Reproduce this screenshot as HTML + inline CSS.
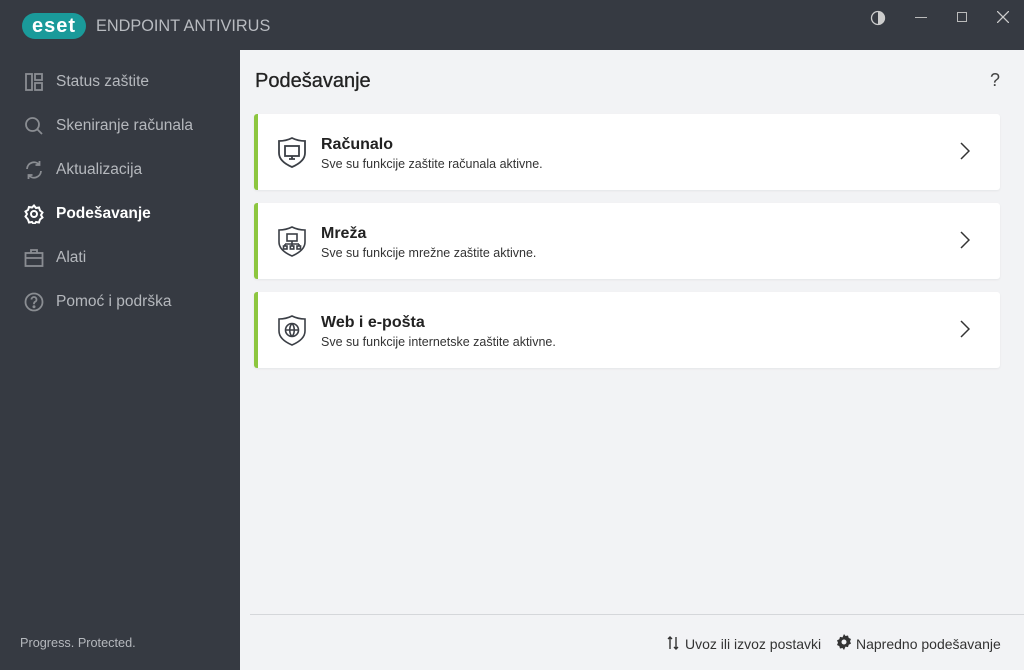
<!DOCTYPE html>
<html><head><meta charset="utf-8"><style>
*{margin:0;padding:0;box-sizing:border-box}
body{width:1024px;height:670px;background:#363a42;font-family:"Liberation Sans",sans-serif;position:relative;overflow:hidden}
.logo{position:absolute;left:22px;top:13px;width:64px;height:26px;background:#1a9a9a;border-radius:13px;color:#fff;font-weight:bold;font-size:20px;line-height:26px;text-align:center;letter-spacing:1px}
.title{position:absolute;left:96px;top:17px;color:#b8bbc0;font-size:16.3px}
.nav{position:absolute;left:24px;color:#b5b8bd;font-size:15.5px}
.nav svg{position:absolute;left:0;top:-1px}
.nav span{position:absolute;left:32px;top:0;white-space:nowrap}
.main{position:absolute;left:240px;top:50px;width:784px;height:620px;background:#f2f3f5}
h1{position:absolute;left:15px;top:20px;font-size:20px;font-weight:normal;color:#222;-webkit-text-stroke:.3px #222}
.card{position:absolute;left:14px;width:746px;height:76px;background:#fff;border-left:4px solid #8dc63f;border-radius:3px;box-shadow:0 1px 2px rgba(0,0,0,.06)}
.card b{position:absolute;left:63px;top:22px;font-size:16px;color:#222}
.card p{position:absolute;left:63px;top:43px;font-size:12.5px;color:#333}
.card svg.ic{position:absolute;left:19px;top:22px}
.chev{position:absolute;right:30px;top:28px}
.foot{position:absolute;left:10px;top:564px;width:774px;border-top:1px solid #d5d7da}
.fl{position:absolute;top:586px;font-size:14px;color:#333}
</style></head><body>
<div class="logo">eset</div>
<div class="title">ENDPOINT ANTIVIRUS</div>
<svg style="position:absolute;left:870px;top:10px" width="16" height="16"><circle cx="8" cy="8" r="6.5" fill="none" stroke="#ccc" stroke-width="1.3"/><path d="M8 1.5a6.5 6.5 0 0 1 0 13z" fill="#ccc"/></svg>
<div style="position:absolute;left:915px;top:17px;width:12px;height:1px;background:#bbb"></div>
<div style="position:absolute;left:957px;top:12px;width:10px;height:10px;border:1px solid #bbb"></div>
<svg style="position:absolute;left:997px;top:11px" width="12" height="12"><path d="M0 0L12 12M12 0L0 12" stroke="#ccc" stroke-width="1.3"/></svg>

<div class="nav" style="top:73px"><svg width="20" height="20" fill="none" stroke="#8a8d92" stroke-width="1.8"><rect x="2" y="2" width="6" height="16"/><rect x="11" y="2" width="7" height="6"/><rect x="11" y="11" width="7" height="7"/></svg><span>Status zaštite</span></div>
<div class="nav" style="top:117px"><svg width="20" height="20" fill="none" stroke="#8a8d92" stroke-width="1.8"><circle cx="8.5" cy="8.5" r="6.5"/><path d="M13 13l5 5"/></svg><span>Skeniranje računala</span></div>
<div class="nav" style="top:161px"><svg width="20" height="20" fill="none" stroke="#8a8d92" stroke-width="1.8"><path d="M3 9a7 7 0 0 1 12.5-4M17 11a7 7 0 0 1-12.5 4M15.5 1v4h-4M4.5 19v-4h4"/></svg><span>Aktualizacija</span></div>
<div class="nav" style="top:205px;color:#fff;font-weight:bold"><svg width="20" height="20" fill="none" stroke="#fff" stroke-width="2"><circle cx="10" cy="10" r="3"/><path d="M10 1.5l2 2.5 3-.5 1 3 2.5 2-1.5 2.5 1.5 2.5-2.5 2-1 3-3-.5-2 2.5-2-2.5-3 .5-1-3L1.5 12.5 3 10 1.5 7.5 4 6l1-3 3 .5z"/></svg><span>Podešavanje</span></div>
<div class="nav" style="top:249px"><svg width="20" height="20" fill="none" stroke="#8a8d92" stroke-width="1.8"><rect x="1.5" y="5" width="17" height="13"/><path d="M7 5V2h6v3M1.5 10h17"/></svg><span>Alati</span></div>
<div class="nav" style="top:293px"><svg width="20" height="20" fill="none" stroke="#8a8d92" stroke-width="1.8"><circle cx="10" cy="10" r="8.5"/><path d="M7.5 7.5a2.5 2.5 0 1 1 3.5 2.3c-.7.4-1 .9-1 1.7v.8"/><circle cx="10" cy="14.8" r=".6" fill="#8a8d92"/></svg><span>Pomoć i podrška</span></div>
<div style="position:absolute;left:20px;top:636px;color:#b5b8bd;font-size:12.7px">Progress. Protected.</div>

<div class="main">
<h1>Podešavanje</h1>
<div style="position:absolute;left:750px;top:20px;font-size:18px;color:#444">?</div>
<div class="card" style="top:64px"><svg class="ic" width="30" height="34" fill="none" stroke="#3b3f46" stroke-width="1.8"><path d="M15 2C11 4 7 5 2 5v12c0 7 6 11 13 14 7-3 13-7 13-14V5c-5 0-9-1-13-3z"/><rect x="8" y="10" width="14" height="10"/><path d="M12 23h6M15 20v3"/></svg><b>Računalo</b><p>Sve su funkcije zaštite računala aktivne.</p><svg class="chev" width="10" height="18" fill="none" stroke="#333" stroke-width="1.5"><path d="M1 1l8 8-8 8"/></svg></div>
<div class="card" style="top:153px"><svg class="ic" width="30" height="34" fill="none" stroke="#3b3f46" stroke-width="1.6"><path d="M15 2C11 4 7 5 2 5v12c0 7 6 11 13 14 7-3 13-7 13-14V5c-5 0-9-1-13-3z"/><rect x="10" y="9" width="10" height="7"/><path d="M15 16v3M8 19h14M8 19v2M15 19v2M22 19v2"/><rect x="6.5" y="21" width="3.5" height="3"/><rect x="13.3" y="21" width="3.5" height="3"/><rect x="20" y="21" width="3.5" height="3"/></svg><b>Mreža</b><p>Sve su funkcije mrežne zaštite aktivne.</p><svg class="chev" width="10" height="18" fill="none" stroke="#333" stroke-width="1.5"><path d="M1 1l8 8-8 8"/></svg></div>
<div class="card" style="top:242px"><svg class="ic" width="30" height="34" fill="none" stroke="#3b3f46" stroke-width="1.6"><path d="M15 2C11 4 7 5 2 5v12c0 7 6 11 13 14 7-3 13-7 13-14V5c-5 0-9-1-13-3z"/><circle cx="15" cy="16" r="6.5"/><path d="M8.5 16h13M15 9.5c-3 3-3 10 0 13M15 9.5c3 3 3 10 0 13"/></svg><b>Web i e-pošta</b><p>Sve su funkcije internetske zaštite aktivne.</p><svg class="chev" width="10" height="18" fill="none" stroke="#333" stroke-width="1.5"><path d="M1 1l8 8-8 8"/></svg></div>
<div class="foot"></div>
<svg style="position:absolute;left:427px;top:585px" width="12" height="16" fill="none" stroke="#333" stroke-width="1.4"><path d="M3 14V2M1 4l2-2 2 2M9 2v12M7 12l2 2 2-2"/></svg>
<div class="fl" style="left:445px">Uvoz ili izvoz postavki</div>
<svg style="position:absolute;left:596px;top:584px" width="16" height="16" fill="#333"><path d="M8 0l1.5 2 2.5-.5.7 2.4 2.3 1.1-1 2.3 1 2.3-2.3 1.1-.7 2.4-2.5-.5L8 16l-1.5-2-2.5.5-.7-2.4L1 11l1-2.3L1 6.4l2.3-1.1.7-2.4 2.5.5z"/><circle cx="8" cy="8" r="2.5" fill="#f2f3f5"/></svg>
<div class="fl" style="left:616px">Napredno podešavanje</div>
</div>
</body></html>
